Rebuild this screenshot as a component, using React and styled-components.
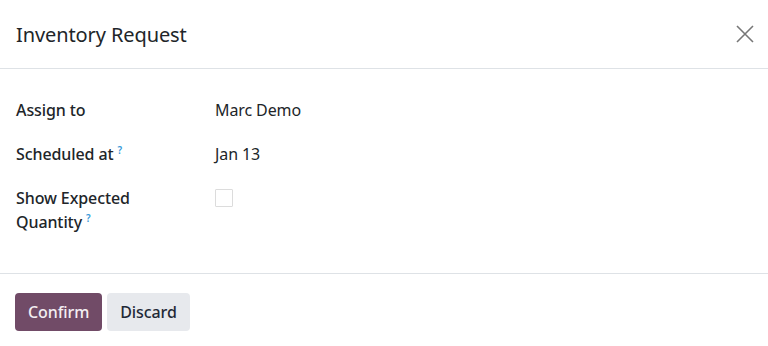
import React from 'react'
import styled, { createGlobalStyle } from 'styled-components'

const Global = createGlobalStyle`
  body {
    margin: 0;
    background: #fff;
    font-family: "Noto Sans", "Open Sans", sans-serif;
    color: #212529;
  }
`

const Dialog = styled.div`
  width: 768px;
  height: 346px;
  display: flex;
  flex-direction: column;
  background: #fff;
  & > * {
    flex-shrink: 0;
  }
`

const Header = styled.div`
  height: 69px;
  box-sizing: border-box;
  display: flex;
  align-items: center;
  justify-content: space-between;
  padding: 0 13px 0 16px;
  border-bottom: 1px solid #dee2e6;
`

const Title = styled.h4`
  margin: 0;
  font-size: 20px;
  font-weight: 400;
  letter-spacing: -0.1px;
  color: #212529;
`

const CloseButton = styled.button`
  border: none;
  background: none;
  padding: 0;
  width: 20px;
  height: 20px;
  display: flex;
  align-items: center;
  justify-content: center;
  cursor: pointer;
`

const Body = styled.div`
  padding: 29px 16px 0;
  height: 205px;
  box-sizing: border-box;
  border-bottom: 1px solid #dee2e6;
  display: grid;
  grid-template-columns: 199px 1fr;
  grid-auto-rows: min-content;
  row-gap: 20px;
  font-size: 16px;
`

const Label = styled.div`
  font-weight: 500;
  line-height: 24px;
  letter-spacing: -0.1px;
  max-width: ${p => p.narrow ? '140px' : 'none'};
`

const Help = styled.sup`
  color: #3a9ad9;
  font-size: 10px;
  font-weight: 600;
  line-height: 0;
  margin-left: 4px;
`

const Value = styled.div`
  line-height: 24px;
  letter-spacing: -0.1px;
`

const Checkbox = styled.span`
  display: block;
  width: 16px;
  height: 16px;
  margin-top: 3px;
  border: 1px solid #dcdcdc;
  border-radius: 1px;
`

const Footer = styled.div`
  display: flex;
  gap: 5px;
  padding: 19px 15px 15px;
`

const Button = styled.button`
  height: 38px;
  padding: 0 13px;
  border: none;
  border-radius: 4px;
  font-family: inherit;
  font-size: 16px;
  font-weight: 500;
  letter-spacing: -0.1px;
  background: ${p => p.primary ? '#714b67' : '#e7e9ed'};
  color: ${p => p.primary ? '#f3eef2' : '#1f2937'};
`

export default function App() {
  return (
    <>
      <Global />
      <Dialog>
        <Header>
          <Title>Inventory Request</Title>
          <CloseButton aria-label="Close">
            <svg width="18" height="18" viewBox="0 0 18 18">
              <path d="M1 1L17 17M17 1L1 17" stroke="#777" strokeWidth="1.6" fill="none" />
            </svg>
          </CloseButton>
        </Header>
        <Body>
          <Label>Assign to</Label>
          <Value>Marc Demo</Value>
          <Label>Scheduled at<Help>?</Help></Label>
          <Value>Jan 13</Value>
          <Label narrow>Show Expected Quantity<Help>?</Help></Label>
          <Value><Checkbox /></Value>
        </Body>
        <Footer>
          <Button primary>Confirm</Button>
          <Button>Discard</Button>
        </Footer>
      </Dialog>
    </>
  )
}
